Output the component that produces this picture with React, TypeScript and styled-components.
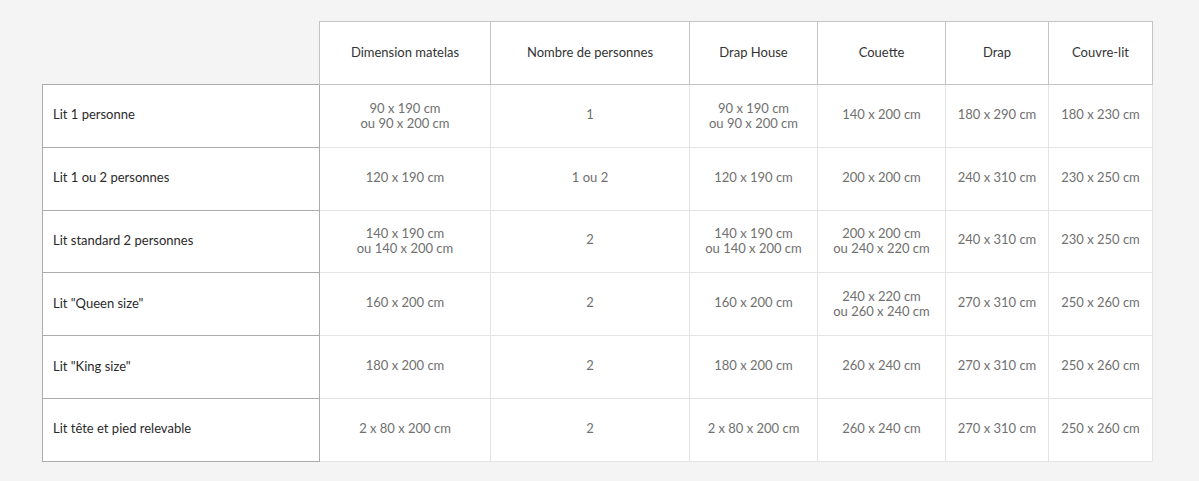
import styled, { createGlobalStyle } from 'styled-components'

const GlobalStyle = createGlobalStyle`
  html, body {
    margin: 0;
    padding: 0;
    background: #f4f4f4;
  }
  body {
    font-family: Lato, 'Open Sans', sans-serif;
  }
`

interface Row {
  label: string
  cells: string[][]
}

const columns = [
  { title: 'Dimension matelas', width: 171 },
  { title: 'Nombre de personnes', width: 199 },
  { title: 'Drap House', width: 128 },
  { title: 'Couette', width: 128 },
  { title: 'Drap', width: 103 },
  { title: 'Couvre-lit', width: 104 },
]

const rows: Row[] = [
  {
    label: 'Lit 1 personne',
    cells: [
      ['90 x 190 cm', 'ou 90 x 200 cm'],
      ['1'],
      ['90 x 190 cm', 'ou 90 x 200 cm'],
      ['140 x 200 cm'],
      ['180 x 290 cm'],
      ['180 x 230 cm'],
    ],
  },
  {
    label: 'Lit 1 ou 2 personnes',
    cells: [['120 x 190 cm'], ['1 ou 2'], ['120 x 190 cm'], ['200 x 200 cm'], ['240 x 310 cm'], ['230 x 250 cm']],
  },
  {
    label: 'Lit standard 2 personnes',
    cells: [
      ['140 x 190 cm', 'ou 140 x 200 cm'],
      ['2'],
      ['140 x 190 cm', 'ou 140 x 200 cm'],
      ['200 x 200 cm', 'ou 240 x 220 cm'],
      ['240 x 310 cm'],
      ['230 x 250 cm'],
    ],
  },
  {
    label: 'Lit "Queen size"',
    cells: [
      ['160 x 200 cm'],
      ['2'],
      ['160 x 200 cm'],
      ['240 x 220 cm', 'ou 260 x 240 cm'],
      ['270 x 310 cm'],
      ['250 x 260 cm'],
    ],
  },
  {
    label: 'Lit "King size"',
    cells: [['180 x 200 cm'], ['2'], ['180 x 200 cm'], ['260 x 240 cm'], ['270 x 310 cm'], ['250 x 260 cm']],
  },
  {
    label: 'Lit tête et pied relevable',
    cells: [['2 x 80 x 200 cm'], ['2'], ['2 x 80 x 200 cm'], ['260 x 240 cm'], ['270 x 310 cm'], ['250 x 260 cm']],
  },
]

const App = () => {
  return (
    <>
      <GlobalStyle />
      <Page>
        <SizeTable>
          <colgroup>
            <col style={{ width: 277 }} />
            {columns.map((c) => (
              <col key={c.title} style={{ width: c.width }} />
            ))}
          </colgroup>
          <thead>
            <tr>
              <Corner />
              {columns.map((c) => (
                <HeadCell key={c.title}>{c.title}</HeadCell>
              ))}
            </tr>
          </thead>
          <tbody>
            {rows.map((row) => (
              <tr key={row.label}>
                <RowLabel>{row.label}</RowLabel>
                {row.cells.map((lines, i) => (
                  <Cell key={i} $multi={lines.length > 1}>
                    {lines.map((line) => (
                      <Line key={line}>{line}</Line>
                    ))}
                  </Cell>
                ))}
              </tr>
            ))}
          </tbody>
        </SizeTable>
      </Page>
    </>
  )
}

export default App

const Page = styled.div`
  padding: 21px 47px 20px 42px;
`

const SizeTable = styled.table`
  width: 1110px;
  border-collapse: collapse;
  table-layout: fixed;
  font-size: 13px;

  tr {
    height: 62.85px;
  }
`

const Corner = styled.td`
  border: none;
  background: transparent;
`

const HeadCell = styled.th`
  background: #fff;
  border: 1px solid #c4c4c4;
  color: #333;
  font-weight: 400;
  text-align: center;
  vertical-align: middle;
  padding: 0 6px 2px;
`

const RowLabel = styled.th`
  background: #fff;
  border: 1px solid #acacac;
  color: #2a2a2a;
  font-weight: 400;
  text-align: left;
  padding: 0 10px 3px;
`

const Cell = styled.td<{ $multi?: boolean }>`
  background: #fff;
  border: 1px solid #e4e4e4;
  color: #707070;
  text-align: center;
  vertical-align: middle;
  line-height: 15px;
  padding: ${(p) => (p.$multi ? '0 4px 0' : '0 4px 3px')};
`

const Line = styled.div`
  white-space: nowrap;
`
